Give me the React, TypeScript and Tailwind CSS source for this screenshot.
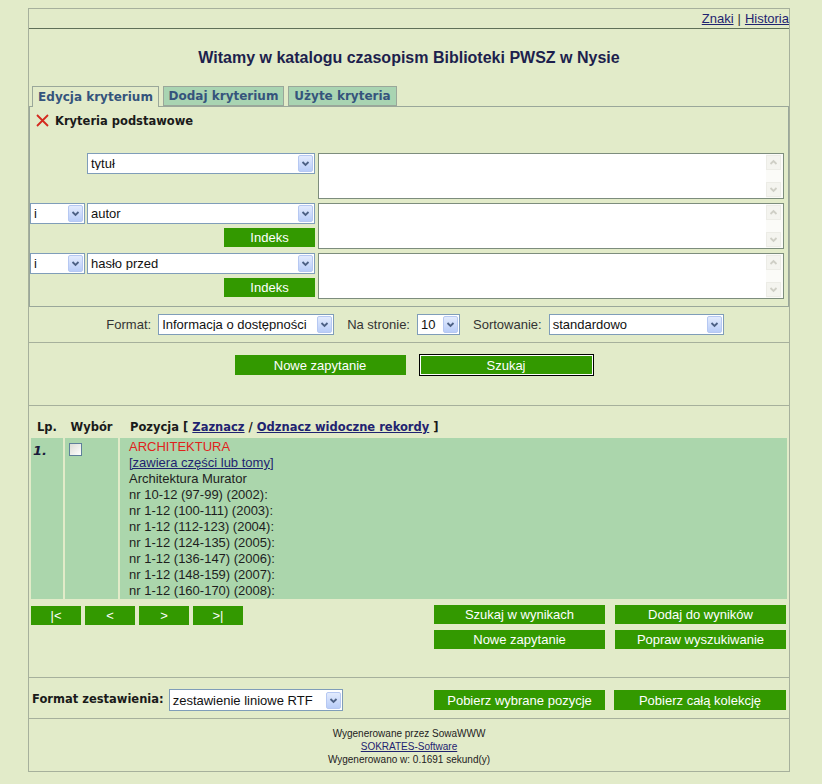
import React from 'react';

const arial = "font-['Liberation_Sans',Arial,sans-serif]";
const verdana = "font-['DejaVu_Sans',Verdana,sans-serif]";

const Chevron: React.FC<{ color?: string; up?: boolean }> = ({ color = '#4d6185', up }) => (
  <svg width="9" height="7" viewBox="0 0 9 7">
    <path d={up ? 'M1.5 5 L4.5 2 L7.5 5' : 'M1.5 2 L4.5 5 L7.5 2'} fill="none" stroke={color} strokeWidth="1.8" />
  </svg>
);

const Select: React.FC<{ value: string; className: string }> = ({ value, className }) => (
  <div className={`flex h-[21px] items-center border border-[#7f9db9] bg-white ${className}`}>
    <span className="flex-1 truncate pl-[3px] text-[13px] leading-none text-[#111]">{value}</span>
    <span className="m-px flex h-[17px] w-[15px] shrink-0 items-center justify-center rounded-[2px] border border-[#b6c8f2] bg-gradient-to-b from-[#e3ebfd] to-[#b9cdf8]">
      <Chevron />
    </span>
  </div>
);

const GreenButton: React.FC<{ label: string; className: string }> = ({ label, className }) => (
  <div className={`flex items-center justify-center bg-[#339900] text-[13px] leading-none text-white ${className}`}>
    {label}
  </div>
);

const ScrollArrow: React.FC<{ up?: boolean }> = ({ up }) => (
  <div className="flex h-[15px] w-[15px] items-center justify-center border border-[#ecece6] bg-[#f4f4ef]">
    <Chevron color="#cfcfc6" up={up} />
  </div>
);

const TextBox: React.FC = () => (
  <div className="flex h-[46px] w-[466px] border border-[#7d8d7d] bg-white">
    <div className="flex-1" />
    <div className="flex w-[17px] flex-col justify-between bg-[#fbfbf8] py-px">
      <ScrollArrow up />
      <ScrollArrow />
    </div>
  </div>
);

const CriterionRow: React.FC<{ field: string; first?: boolean }> = ({ field, first }) => (
  <div className="flex gap-[2px]">
    <div className="w-[55px]">{!first && <Select value="i" className="w-[55px]" />}</div>
    <div className="flex w-[228px] flex-col items-end gap-[4px]">
      <Select value={field} className="w-[228px]" />
      {!first && <GreenButton label="Indeks" className="h-[19px] w-[91px]" />}
    </div>
    <div className="ml-px">
      <TextBox />
    </div>
  </div>
);

const lines = [
  'Architektura Murator',
  'nr 10-12 (97-99) (2002):',
  'nr 1-12 (100-111) (2003):',
  'nr 1-12 (112-123) (2004):',
  'nr 1-12 (124-135) (2005):',
  'nr 1-12 (136-147) (2006):',
  'nr 1-12 (148-159) (2007):',
  'nr 1-12 (160-170) (2008):',
];

export default function App() {
  return (
    <div className={`min-h-screen bg-[#e2ebc9] pt-[8px] ${arial}`}>
      <div className="ml-[28px] w-[762px] border border-[#a6b09c] bg-[#e2ebc9]">
        {/* top links */}
        <div className="flex h-[20px] items-center justify-end border-b border-[#5f7058] text-[13px] text-[#333]">
          <a className="text-[#1f2370] underline">Znaki</a>
          <span className="px-[4px]">|</span>
          <a className="text-[#1f2370] underline">Historia</a>
        </div>

        <div className="flex h-[57px] items-center justify-center text-[16px] font-bold text-[#1d1f4d]">
          Witamy w katalogu czasopism Biblioteki PWSZ w Nysie
        </div>

        {/* tabs */}
        <div className={`flex h-[20px] gap-[4px] pl-[3px] text-[12px] font-bold text-[#35547c] ${verdana}`}>
          <div className="relative z-10 -mb-px flex w-[127px] items-center justify-center border border-b-0 border-[#9aa79a] bg-[#e2ebc9]">
            Edycja kryterium
          </div>
          <div className="flex w-[121px] items-center justify-center border border-[#9aa79a] bg-[#a9d4b2]">
            Dodaj kryterium
          </div>
          <div className="flex w-[109px] items-center justify-center border border-[#9aa79a] bg-[#a9d4b2]">
            Użyte kryteria
          </div>
        </div>

        {/* criteria panel */}
        <div className="h-[201px] border border-[#9aa79a]">
          <div className={`flex h-[46px] items-start gap-[6px] pl-[6px] pt-[6px] text-[11px] font-bold text-[#1a1a1a] ${verdana}`}>
            <svg width="13" height="13" viewBox="0 0 13 13" className="mt-px">
              <path d="M1 1 L12 12 M12 1 L1 12" stroke="#d42a1e" strokeWidth="1.8" />
            </svg>
            <span className="text-[11.5px]">Kryteria podstawowe</span>
          </div>
          <div className="flex flex-col gap-[4px]">
            <CriterionRow field="tytuł" first />
            <CriterionRow field="autor" />
            <CriterionRow field="hasło przed" />
          </div>
        </div>

        {/* format row */}
        <div className="flex h-[36px] items-center justify-center border-b border-[#a6b09c] pl-[12px] text-[13px] text-[#333]">
          <span className="mr-[7px]">Format:</span>
          <Select value="Informacja o dostępności" className="w-[176px]" />
          <span className="ml-[13px] mr-[7px]">Na stronie:</span>
          <Select value="10" className="w-[43px]" />
          <span className="ml-[13px] mr-[7px]">Sortowanie:</span>
          <Select value="standardowo" className="w-[175px]" />
        </div>

        {/* search buttons */}
        <div className="flex h-[63px] items-start justify-center gap-[13px] border-b border-[#a6b09c] pl-[10px] pt-[11px]">
          <GreenButton label="Nowe zapytanie" className="mt-px h-[20px] w-[171px]" />
          <div className="border border-black">
            <div className="border border-white">
              <GreenButton label="Szukaj" className="h-[18px] w-[171px]" />
            </div>
          </div>
        </div>

        {/* results */}
        <div className="border-b border-[#a6b09c] px-[2px] pt-[11px]">
          <div className={`flex h-[21px] items-center gap-[2px] text-[11.5px] font-bold text-[#1a1a1a] ${verdana}`}>
            <div className="w-[32px] text-center">Lp.</div>
            <div className="w-[53px] text-center">Wybór</div>
            <div className="pl-[10px]">
              Pozycja [ <a className="text-[#1f2370] underline">Zaznacz</a> /{' '}
              <a className="text-[#1f2370] underline">Odznacz widoczne rekordy</a> ]
            </div>
          </div>
          <div className="flex h-[161px] gap-[2px]">
            <div className={`w-[32px] bg-[#abd6ac] pl-[2px] pt-[3px] text-[13px] font-bold italic text-[#1a1a3a] ${verdana}`}>1.</div>
            <div className="flex w-[53px] justify-start bg-[#abd6ac] pl-[4px] pt-[5px]">
              <div className="h-[13px] w-[13px] border border-[#5f7f9a] bg-gradient-to-br from-[#dcdcd6] to-white" />
            </div>
            <div className="flex-1 bg-[#abd6ac] pl-[9px] pt-px text-[13px] leading-[16px] text-[#1e1e1e]">
              <div className="text-[#e0221c]">ARCHITEKTURA</div>
              <div>
                <a className="text-[#1f2370] underline">[zawiera części lub tomy]</a>
              </div>
              {lines.map((l) => (
                <div key={l}>{l}</div>
              ))}
            </div>
          </div>
          <div className="flex h-[78px] justify-between pt-[6px]">
            <div className="flex gap-[4px] pt-px">
              {['|<', '<', '>', '>|'].map((t) => (
                <GreenButton key={t} label={t} className="h-[19px] w-[50px] text-[10px] text-[#d6e8c8]" />
              ))}
            </div>
            <div className="grid grid-cols-2 gap-x-[10px] gap-y-[6px] self-start pr-px">
              <GreenButton label="Szukaj w wynikach" className="h-[19px] w-[171px]" />
              <GreenButton label="Dodaj do wyników" className="h-[19px] w-[171px]" />
              <GreenButton label="Nowe zapytanie" className="h-[19px] w-[171px]" />
              <GreenButton label="Popraw wyszukiwanie" className="h-[19px] w-[171px]" />
            </div>
          </div>
        </div>

        {/* export */}
        <div className="flex h-[41px] items-center justify-between border-b border-[#a6b09c] px-[3px] pt-[4px]">
          <div className="flex items-center gap-[5px]">
            <span className={`text-[11.5px] font-bold text-[#1a1a1a] ${verdana}`}>Format zestawienia:</span>
            <Select value="zestawienie liniowe RTF" className="h-[22px] w-[174px]" />
          </div>
          <div className="flex gap-[9px]">
            <GreenButton label="Pobierz wybrane pozycje" className="h-[20px] w-[171px]" />
            <GreenButton label="Pobierz całą kolekcję" className="h-[20px] w-[172px]" />
          </div>
        </div>

        {/* footer */}
        <div className="flex h-[52px] flex-col items-center justify-center pt-[3px] text-[10px] leading-[13px] text-[#222]">
          <div>Wygenerowane przez SowaWWW</div>
          <a className="text-[#1f2370] underline">SOKRATES-Software</a>
          <div>Wygenerowano w: 0.1691 sekund(y)</div>
        </div>
      </div>
    </div>
  );
}
